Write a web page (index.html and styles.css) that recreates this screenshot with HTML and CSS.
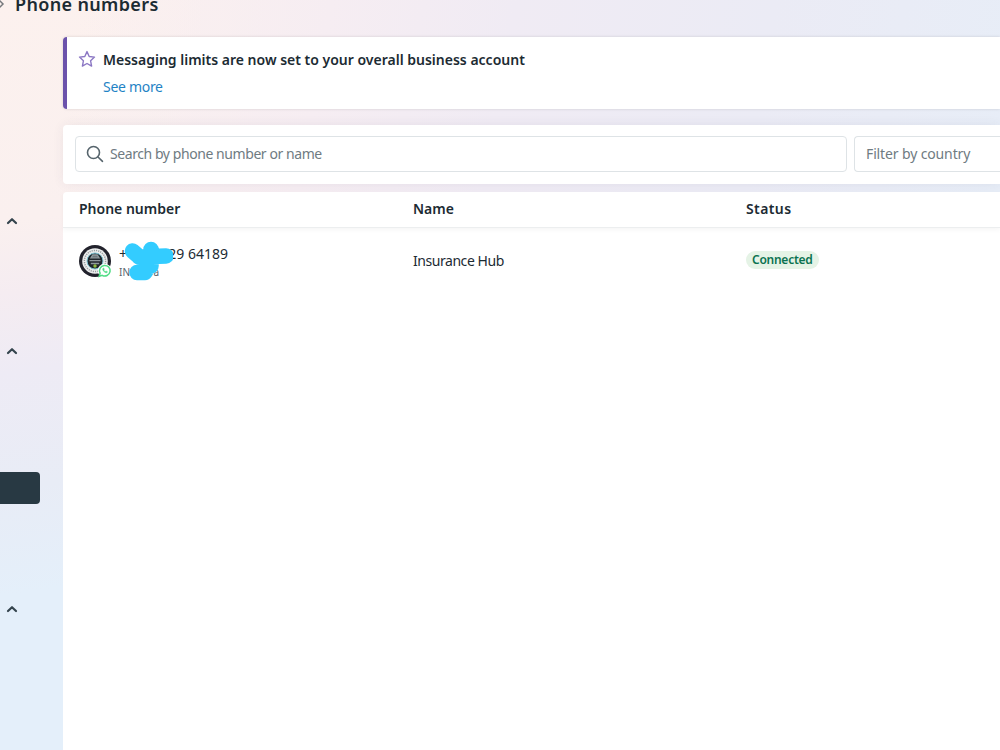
FILE: index.html
```html
<!DOCTYPE html>
<html lang="en">
<head>
    <meta charset="UTF-8">
    <meta name="viewport" content="width=device-width, initial-scale=1.0">
    <title>Phone numbers</title>
    <link rel="stylesheet" href="styles.css">
</head>
<body>
    <aside class="sidebar">
        <button class="toggle"><svg viewBox="0 0 12 8"><path d="M2 6l4-3.8L10 6"/></svg></button>
        <button class="toggle"><svg viewBox="0 0 12 8"><path d="M2 6l4-3.8L10 6"/></svg></button>
        <div class="nav-active"></div>
        <button class="toggle"><svg viewBox="0 0 12 8"><path d="M2 6l4-3.8L10 6"/></svg></button>
    </aside>

    <div class="page">
        <header class="breadcrumb">
            <svg class="crumb-arrow" viewBox="0 0 8 12"><path d="M2 2l4 4-4 4"/></svg>
            <h1 class="page-title">Phone numbers</h1>
        </header>

        <main>
            <section class="notice">
                <svg class="star" viewBox="0 0 18 18"><path d="M9 1.6l2.2 4.9 5.3.6-3.9 3.7 1 5.3L9 13.5l-4.6 2.6 1-5.3L1.5 7.1l5.3-.6z"/></svg>
                <div>
                    <h2 class="notice-title">Messaging limits are now set to your overall business account</h2>
                    <a class="see-more">See more</a>
                </div>
            </section>

            <section class="filters">
                <div class="field search">
                    <svg class="search-icon" viewBox="0 0 18 18"><circle cx="7.5" cy="7.5" r="6"/><path d="M12 12l4.5 4.3"/></svg>
                    <span class="search-text">Search by phone number or name</span>
                </div>
                <div class="field country"><span class="country-text">Filter by country</span></div>
            </section>

            <section class="table">
                <div class="row head">
                    <div class="th-phone">Phone number</div>
                    <div class="th-name">Name</div>
                    <div class="th-status">Status</div>
                </div>
                <div class="row">
                    <div class="phone">
                        <svg class="avatar" viewBox="0 0 34 34">
                            <circle cx="16" cy="16" r="16" fill="#22222c"/>
                            <circle cx="16" cy="16" r="12.8" fill="#eceeee"/>
                            <circle cx="16" cy="16" r="10.6" fill="none" stroke="#9a9ea1" stroke-width="1.5" stroke-dasharray="1.2 1"/>
                            <circle cx="16" cy="16" r="8" fill="#20262c" stroke="#7fc4d4" stroke-width="1"/>
                            <path d="M12 12.8l1.8-2.8h4.4l1.8 2.8zM10.5 15.7h11M11.8 18.5h8.4" stroke="#8f999d" stroke-width="1.3" fill="#6c767b"/>
                            <circle cx="16" cy="21" r="1.7" fill="#8dbb3f"/>
                            <circle cx="25.7" cy="25.8" r="7" fill="#fff"/>
                            <path d="M20.2 31.3l.9-3.2a5.3 5.3 0 1 1 2.1 2.2z" fill="#fff" stroke="#4fdc84" stroke-width="1.5"/>
                            <path d="M23.8 23.5c-.8 1.8 2.2 4.9 4.2 4.2l.5-1-1.5-.8-.7.6c-.8-.3-1.3-.9-1.5-1.6l.6-.6-.7-1.4z" fill="#4fdc84" stroke="#4fdc84" stroke-width=".4"/>
                        </svg>
                        <div class="phone-info">
                            <div class="phone-top"><span>+</span><span class="digits">29 64189</span></div>
                            <div class="phone-sub"><span>IN</span><span>a</span></div>
                        </div>
                        <svg class="scribble" viewBox="0 0 50 40">
                            <path d="M9.5 10l7 6M28 8.5V16M16 16l27-1M28 16v9M26 25l-4 6.5h-8"/>
                        </svg>
                    </div>
                    <div class="name">Insurance Hub</div>
                    <div class="status"><span class="badge">Connected</span></div>
                </div>
            </section>
        </main>
    </div>
</body>
</html>
```
FILE: styles.css
```css
* {
    margin: 0;
    padding: 0;
    box-sizing: border-box;
}

body {
    display: flex;
    width: 1000px;
    height: 750px;
    overflow: hidden;
    font-family: 'Noto Sans', sans-serif;
    font-size: 14px;
    line-height: 20px;
    color: #1c2b33;
    background:
        linear-gradient(100deg, rgba(240, 235, 244, 0) 8%, #f6edf2 32%, #f0ebf4 50%, #ebebf5 75%, #e7edf7 100%) no-repeat 0 0 / 100% 195px,
        linear-gradient(172deg, #fcf1ee 0%, #faf0ef 25%, #f5ecf1 33%, #eeebf5 42%, #e8ecf6 55%, #e4effa 67%, #e4effa 100%);
}

svg {
    display: block;
    fill: none;
    flex-shrink: 0;
}

.sidebar {
    width: 63px;
    padding-top: 217px;
}

.toggle {
    display: block;
    width: 12px;
    height: 8px;
    margin-left: 6px;
    border: none;
    background: none;
}

.toggle + .toggle {
    margin-top: 122px;
}

.toggle svg {
    width: 12px;
    height: 8px;
    stroke: #34444d;
    stroke-width: 2.2;
    stroke-linecap: round;
    stroke-linejoin: round;
}

.nav-active {
    width: 40px;
    height: 32px;
    margin: 117px 0 101px;
    border-radius: 0 4px 4px 0;
    background: #283943;
}

.page {
    flex: 1;
    display: flex;
    flex-direction: column;
}

.breadcrumb {
    display: flex;
    height: 37px;
    margin-left: -66px;
}

.crumb-arrow {
    width: 8px;
    height: 12px;
    margin-top: -2px;
    stroke: #76797d;
    stroke-width: 1.5;
}

.page-title {
    margin: -8px 0 0 10px;
    font-size: 18px;
    line-height: 24px;
    font-weight: 600;
    letter-spacing: 0.35px;
}

main {
    flex: 1;
    display: flex;
    flex-direction: column;
}

.notice {
    display: flex;
    height: 72px;
    padding: 13px 0 0 11px;
    border-left: 4px solid #6b52ab;
    border-radius: 4px 0 0 4px;
    background: #fff;
    box-shadow: 0 0 3px rgba(0, 0, 0, 0.15);
}

.star {
    width: 18px;
    height: 18px;
    margin-right: 7px;
    stroke: #8c78c4;
    stroke-width: 1.4;
    stroke-linejoin: round;
}

.notice-title {
    font-size: 14px;
    font-weight: 600;
}

.see-more {
    display: block;
    margin-top: 7px;
    color: #1f83c5;
    letter-spacing: -0.3px;
}

.filters {
    display: flex;
    gap: 7px;
    height: 59px;
    margin-top: 16px;
    padding: 11px 0 0 12px;
    border-radius: 4px 0 0 4px;
    background: #fff;
    box-shadow: 0 0 12px rgba(50, 50, 90, 0.07);
}

.field {
    display: flex;
    align-items: center;
    height: 36px;
    border: 1px solid #dee3e6;
    border-radius: 4px;
    color: #6f7b82;
}

.search {
    width: 772px;
    padding-left: 10px;
}

.search-icon {
    width: 18px;
    height: 18px;
    margin-right: 6px;
    stroke: #56646c;
    stroke-width: 1.6;
    stroke-linecap: round;
}

.search-text {
    letter-spacing: -0.43px;
}

.country {
    flex: 1;
    padding-left: 11px;
    border-right: none;
    border-radius: 4px 0 0 4px;
}

.country-text {
    letter-spacing: -0.13px;
}

.table {
    flex: 1;
    margin-top: 8px;
    border-radius: 4px 0 0 0;
    background: #fff;
}

.row {
    display: grid;
    grid-template-columns: 334px 333px 1fr;
    align-items: center;
    height: 68px;
    padding-left: 16px;
}

.head {
    height: 36px;
    padding-bottom: 1px;
    border-bottom: 1px solid #eceeef;
    box-shadow: 0 2px 5px rgba(0, 0, 0, 0.04);
    font-weight: 600;
}

.th-status {
    letter-spacing: 0.4px;
}

.phone {
    position: relative;
    display: flex;
    align-items: center;
}

.avatar {
    width: 34px;
    height: 34px;
    margin-right: 6px;
}

.phone-top {
    display: flex;
    justify-content: space-between;
    width: 109px;
}

.phone-sub {
    display: flex;
    justify-content: space-between;
    width: 40px;
    font-size: 10px;
    line-height: 16px;
    color: #56646c;
}

/* marker stroke over the private digits */
.scribble {
    position: absolute;
    left: 44px;
    top: -3px;
    width: 50px;
    height: 40px;
    stroke: #33ccff;
    stroke-width: 15.5;
    stroke-linecap: round;
    stroke-linejoin: round;
}

.name {
    padding-bottom: 2px;
    letter-spacing: -0.45px;
}

.status {
    padding-bottom: 7px;
}

.badge {
    display: inline-block;
    height: 18px;
    padding: 0 6px;
    border-radius: 9px;
    background: #e5f3e6;
    color: #0b7250;
    font-size: 12px;
    line-height: 18px;
    font-weight: 600;
    letter-spacing: -0.25px;
}
```
